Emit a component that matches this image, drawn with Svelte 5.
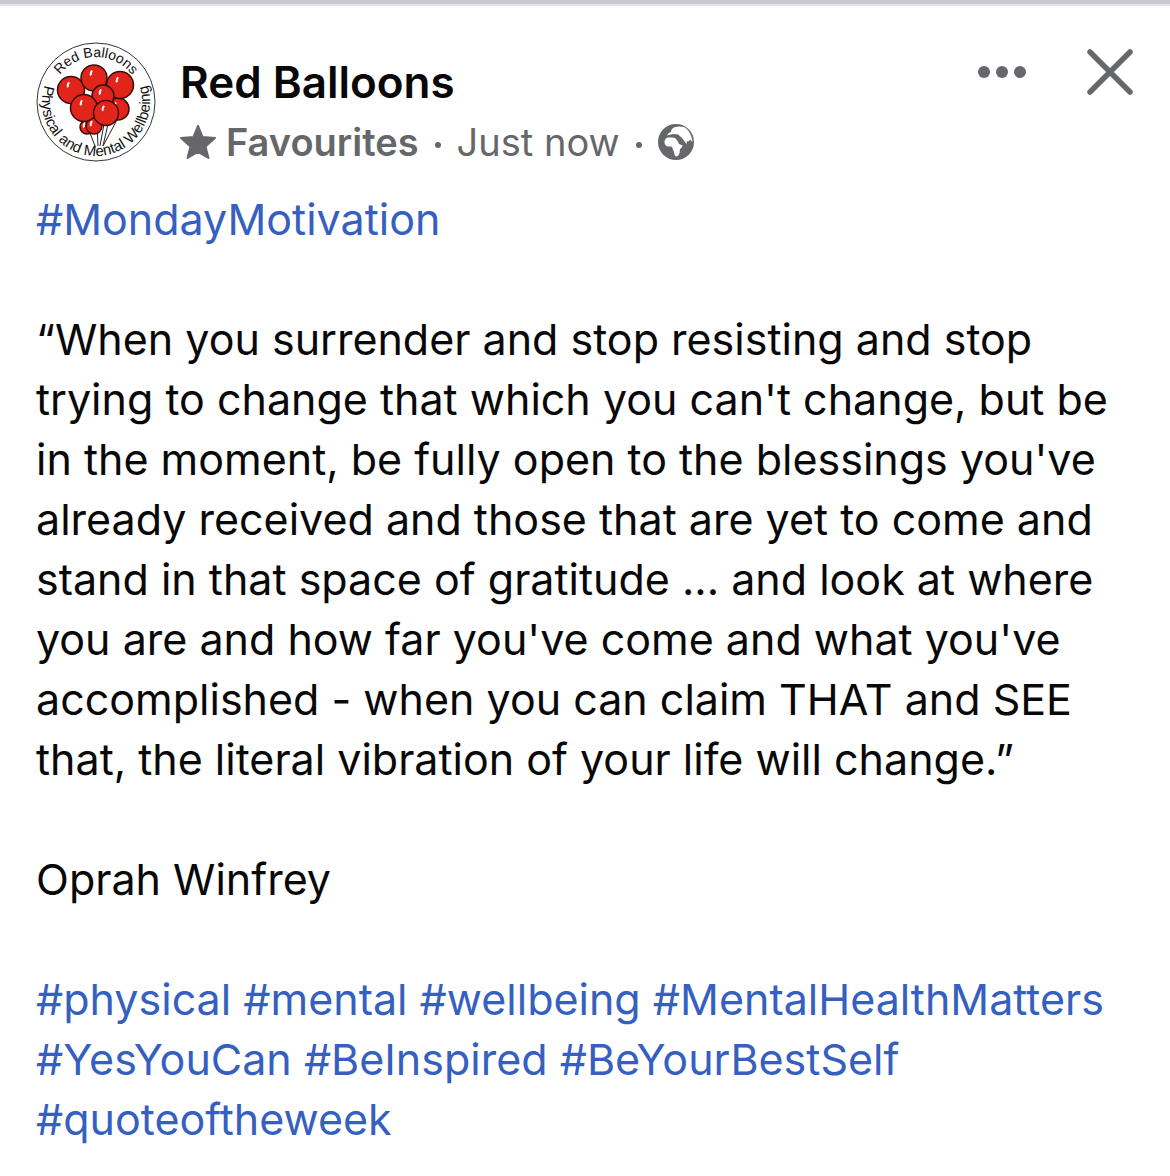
<script lang="ts">
	const quote =
		"“When you surrender and stop resisting and stop trying to change that which you can't change, but be in the moment, be fully open to the blessings you've already received and those that are yet to come and stand in that space of gratitude ... and look at where you are and how far you've come and what you've accomplished - when you can claim THAT and SEE that, the literal vibration of your life will change.”";

	const tags = [
		'physical',
		'mental',
		'wellbeing',
		'MentalHealthMatters',
		'YesYouCan',
		'BeInspired',
		'BeYourBestSelf',
		'quoteoftheweek'
	];

	// back to front
	const balloons = [
		{ x: 51, y: 85, r: 7 },
		{ x: 58, y: 84, r: 8 },
		{ x: 82, y: 67, r: 11 },
		{ x: 35, y: 48, r: 13.5 },
		{ x: 84, y: 43, r: 13.5 },
		{ x: 58, y: 36, r: 13 },
		{ x: 67, y: 54, r: 11 },
		{ x: 48, y: 66, r: 13.5 },
		{ x: 70, y: 71, r: 12.5 }
	];
</script>

<article>
	<header>
		<a class="avatar" href="#profile" aria-label="Red Balloons profile">
			<svg viewBox="0 0 120 120">
				<defs>
					<path id="arc-top" d="M15 60a45 45 0 0 1 90 0" />
					<path id="arc-bottom" d="M60 6a54 54 0 0 0 0 108a54 54 0 0 0 0-108" />
				</defs>
				<circle cx="60" cy="60" r="59" fill="#fff" stroke="#333" />
				<path
					d="M54 91l5 13M61 84l1 20M68 82l-4 22M72 82l-5 22M82 76l-15 28"
					fill="none"
					stroke="#222"
				/>
				{#each balloons as b}
					<circle cx={b.x} cy={b.y} r={b.r} fill="#e1251b" stroke="#3a0c0a" stroke-width="1.5" />
					<path
						d="M{b.x - 2} {b.y - b.r / 2 - 1}q-2 3-1 5"
						fill="none"
						stroke="#fff"
						stroke-width="2"
					/>
				{/each}
				<text text-anchor="middle">
					<textPath href="#arc-top" startOffset="50%">Red Balloons</textPath>
				</text>
				<text class="motto" text-anchor="middle">
					<textPath href="#arc-bottom" startOffset="50%">Physical and Mental Wellbeing</textPath>
				</text>
			</svg>
		</a>

		<div class="byline">
			<h1>Red Balloons</h1>
			<div class="meta">
				<svg class="star" viewBox="0 0 36 34" aria-hidden="true">
					<path
						d="M18 1l4.500 11 12.500 1-9.500 8.500 3 11.500-10.500-6-10.500 6 3-11.500-9.500-8.500 12.500-1z"
						fill="currentColor"
						stroke="currentColor"
						stroke-width="2"
						stroke-linejoin="round"
					/>
				</svg>
				<strong>Favourites</strong>
				<i></i>
				<span>Just now</span>
				<i></i>
				<svg class="globe" viewBox="0 0 36 36" role="img" aria-label="Public">
					<circle cx="18" cy="18" r="18" fill="currentColor" />
					<path
						d="M9 11.500q1-3 4-3.500 0-3 3-4.500 5-2 11 0c4 3 7 8 7.500 14.500l-2.500-2.500-1.500 2-1.500-.5-.5 3-3-4-2.500-3-3-2.500q-4-1-7 0z"
						fill="#fff"
					/>
					<path
						d="M6.500 18q0-3 3-4.500h5q3 0 4 2 1.500 2 2.500 4.500l3.500 1.500q0 2-2.500 3.500l-.5 4q-1 3.500-3.500 3.500-2-1-2-4.500l-1.500-3.500q0-2-1.500-2h-3.500q-3-1-3-4.500z"
						fill="#fff"
					/>
				</svg>
			</div>
		</div>

		<div class="actions">
			<button aria-label="More options">
				<svg viewBox="0 0 48 48">
					<circle cx="6" cy="24" r="6" fill="currentColor" />
					<circle cx="24" cy="24" r="6" fill="currentColor" />
					<circle cx="42" cy="24" r="6" fill="currentColor" />
				</svg>
			</button>
			<button aria-label="Close">
				<svg viewBox="0 0 48 48">
					<path
						d="M4 4l40 40M44 4L4 44"
						fill="none"
						stroke="currentColor"
						stroke-width="5.5"
						stroke-linecap="round"
					/>
				</svg>
			</button>
		</div>
	</header>

	<div class="content">
		<p><a href="#MondayMotivation">#MondayMotivation</a></p>
		<p>{quote}</p>
		<p>Oprah Winfrey</p>
		<p>
			{#each tags as tag}
				<a href="#{tag}">#{tag}</a>{' '}
			{/each}
		</p>
	</div>
</article>

<style>
	:global(body) {
		margin: 0;
		background: #fff;
	}

	article {
		border-top: 4px solid #c9cacf;
		box-shadow: inset 0 2px #e3e4e8;
		padding: 38px 36px 24px;
		font-family: Inter, 'Liberation Sans', sans-serif;
		color: #080809;
	}

	header {
		display: flex;
		align-items: flex-start;
		color: #65676b;
	}

	.avatar {
		width: 120px;
		height: 120px;
		margin-right: 24px;
	}

	.avatar svg {
		display: block;
	}

	.avatar text {
		font-family: 'Liberation Sans', sans-serif;
		font-size: 14px;
		fill: #111;
	}

	.avatar .motto {
		font-size: 15px;
	}

	.byline {
		flex: 1;
		padding-top: 10px;
	}

	h1 {
		margin: 0;
		font-size: 44px;
		line-height: 60px;
		font-weight: 600;
		color: #080809;
	}

	.meta {
		display: flex;
		align-items: center;
		font-size: 38px;
		line-height: 60px;
	}

	.meta strong {
		font-weight: 600;
	}

	.meta i {
		width: 6px;
		height: 6px;
		margin: 6px 16px 0;
		border-radius: 50%;
		background: currentColor;
	}

	.star {
		width: 36px;
		height: 34px;
		margin-right: 10px;
	}

	.globe {
		width: 36px;
		height: 36px;
	}

	.actions {
		display: flex;
		gap: 60px;
		padding-top: 6px;
	}

	button {
		width: 48px;
		height: 48px;
		padding: 0;
		border: 0;
		background: none;
		color: inherit;
		cursor: pointer;
	}

	button svg {
		display: block;
	}

	.content {
		padding-top: 17px;
		font-size: 43px;
		line-height: 60px;
	}

	p {
		margin: 0 0 60px;
	}

	p:last-child {
		margin-bottom: 0;
	}

	p a {
		color: #3660bf;
		text-decoration: none;
	}
</style>
